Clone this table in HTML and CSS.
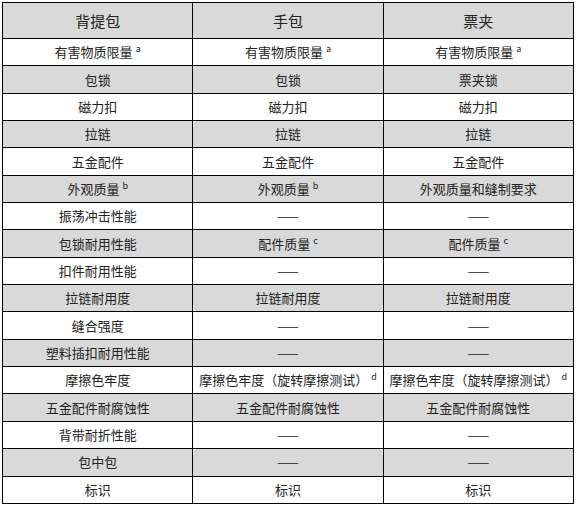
FILE: index.html
```html
<!DOCTYPE html>
<html lang="zh">
<head>
<meta charset="utf-8">
<link rel="stylesheet" href="styles.css">
</head>
<body>
<table class="spec">
  <thead>
    <tr class="head"><th>背提包</th><th>手包</th><th>票夹</th></tr>
  </thead>
  <tbody>
    <tr><td>有害物质限量<sup>a</sup></td><td>有害物质限量<sup>a</sup></td><td>有害物质限量<sup>a</sup></td></tr>
    <tr class="alt"><td>包锁</td><td>包锁</td><td>票夹锁</td></tr>
    <tr><td>磁力扣</td><td>磁力扣</td><td>磁力扣</td></tr>
    <tr class="alt"><td>拉链</td><td>拉链</td><td>拉链</td></tr>
    <tr><td>五金配件</td><td>五金配件</td><td>五金配件</td></tr>
    <tr class="alt"><td>外观质量<sup>b</sup></td><td>外观质量<sup>b</sup></td><td>外观质量和缝制要求</td></tr>
    <tr><td>振荡冲击性能</td><td>——</td><td>——</td></tr>
    <tr class="alt"><td>包锁耐用性能</td><td>配件质量<sup>c</sup></td><td>配件质量<sup>c</sup></td></tr>
    <tr><td>扣件耐用性能</td><td>——</td><td>——</td></tr>
    <tr class="alt"><td>拉链耐用度</td><td>拉链耐用度</td><td>拉链耐用度</td></tr>
    <tr><td>缝合强度</td><td>——</td><td>——</td></tr>
    <tr class="alt"><td>塑料插扣耐用性能</td><td>——</td><td>——</td></tr>
    <tr><td>摩擦色牢度</td><td>摩擦色牢度（旋转摩擦测试）<sup>d</sup></td><td>摩擦色牢度（旋转摩擦测试）<sup>d</sup></td></tr>
    <tr class="alt"><td>五金配件耐腐蚀性</td><td>五金配件耐腐蚀性</td><td>五金配件耐腐蚀性</td></tr>
    <tr><td>背带耐折性能</td><td>——</td><td>——</td></tr>
    <tr class="alt"><td>包中包</td><td>——</td><td>——</td></tr>
    <tr><td>标识</td><td>标识</td><td>标识</td></tr>
  </tbody>
</table>
</body>
</html>
```
FILE: styles.css
```css
html, body {
  margin: 0;
  padding: 0;
  background: #ffffff;
}
body {
  padding: 2px 0 0 2px;
  font-family: "Microsoft YaHei", "Noto Sans CJK SC", "Noto Sans", sans-serif;
  color: #222222;
}
.spec {
  border-collapse: collapse;
  width: 572px;
  table-layout: fixed;
  border: 1.5px solid #000000;
}
.spec th,
.spec td {
  border: 1px solid #000000;
  text-align: center;
  vertical-align: middle;
  padding: 0;
  white-space: nowrap;
  line-height: 16px;
}
.spec th {
  font-size: 15px;
  font-weight: normal;
  height: 35px;
  background: #d9d9d9;
}
.spec td {
  font-size: 13px;
  height: 26.35px;
}
.spec tr.alt td {
  background: #d9d9d9;
}
.spec sup {
  font-size: 9px;
  line-height: 0;
  vertical-align: 5px;
  margin-left: 3px;
}
```
